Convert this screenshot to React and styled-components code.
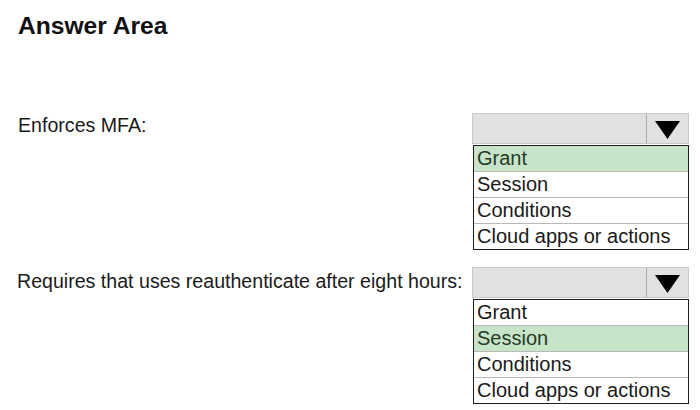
import React from "react";
import styled, { createGlobalStyle } from "styled-components";

const Global = createGlobalStyle`
  html, body { margin: 0; padding: 0; background: #fff; }
  body { font-family: "Liberation Sans", Arial, sans-serif; color: #1a1a1a; }
`;

const Page = styled.div`
  width: 700px;
  height: 410px;
  box-sizing: border-box;
  padding: 12px 0 0 18px;
  overflow: hidden;
`;

const Title = styled.h1`
  margin: 0;
  font-size: 24.6px;
  line-height: 28px;
  font-weight: 700;
  color: #111;
`;

const Questions = styled.div`
  margin-top: 73px;
  display: grid;
  grid-template-columns: 454px 217px;
  row-gap: 17px;
`;

const Label = styled.div`
  font-size: 19.6px;
  line-height: 24px;
  padding-top: ${(p) => p.$offset || 0}px;
  margin-left: ${(p) => p.$shift || 0}px;
  white-space: nowrap;
`;

const Dropdown = styled.div`
  display: flex;
  flex-direction: column;
`;

const Header = styled.div`
  height: 31px;
  display: flex;
  background: #e1e1e1;
  border: 1px solid #c9c9c9;
  box-sizing: border-box;
`;

const HeaderField = styled.div`
  flex: 1;
  border-right: 1px solid #a9a9a9;
`;

const ArrowCell = styled.div`
  width: 41px;
  display: flex;
  align-items: center;
  justify-content: center;
  padding-top: 2px;
  box-sizing: border-box;
`;

const List = styled.ul`
  list-style: none;
  margin: 1px 0 0 1px;
  padding: 0;
  border: 1px solid #1e1e1e;
`;

const Item = styled.li`
  height: 25px;
  line-height: 24px;
  padding-left: 3px;
  font-size: 20px;
  background: ${(p) => (p.$selected ? "#c8e4c8" : "#fff")};
  color: ${(p) => (p.$selected ? "#263a26" : "#1a1a1a")};
  & + & {
    border-top: 1px solid #b9b9b9;
  }
`;

const options = ["Grant", "Session", "Conditions", "Cloud apps or actions"];

const Arrow = () => (
  <svg width="25" height="18" viewBox="0 0 25 18">
    <polygon points="0,0 25,0 12.5,18" fill="#000" />
  </svg>
);

const Select = ({ selected }) => (
  <Dropdown>
    <Header>
      <HeaderField />
      <ArrowCell>
        <Arrow />
      </ArrowCell>
    </Header>
    <List>
      {options.map((o) => (
        <Item key={o} $selected={o === selected}>
          {o}
        </Item>
      ))}
    </List>
  </Dropdown>
);

export default function App() {
  return (
    <Page>
      <Global />
      <Title>Answer Area</Title>
      <Questions>
        <Label $offset={0}>Enforces MFA:</Label>
        <Select selected="Grant" />
        <Label $offset={2} $shift={-1}>
          Requires that uses reauthenticate after eight hours:
        </Label>
        <Select selected="Session" />
      </Questions>
    </Page>
  );
}
